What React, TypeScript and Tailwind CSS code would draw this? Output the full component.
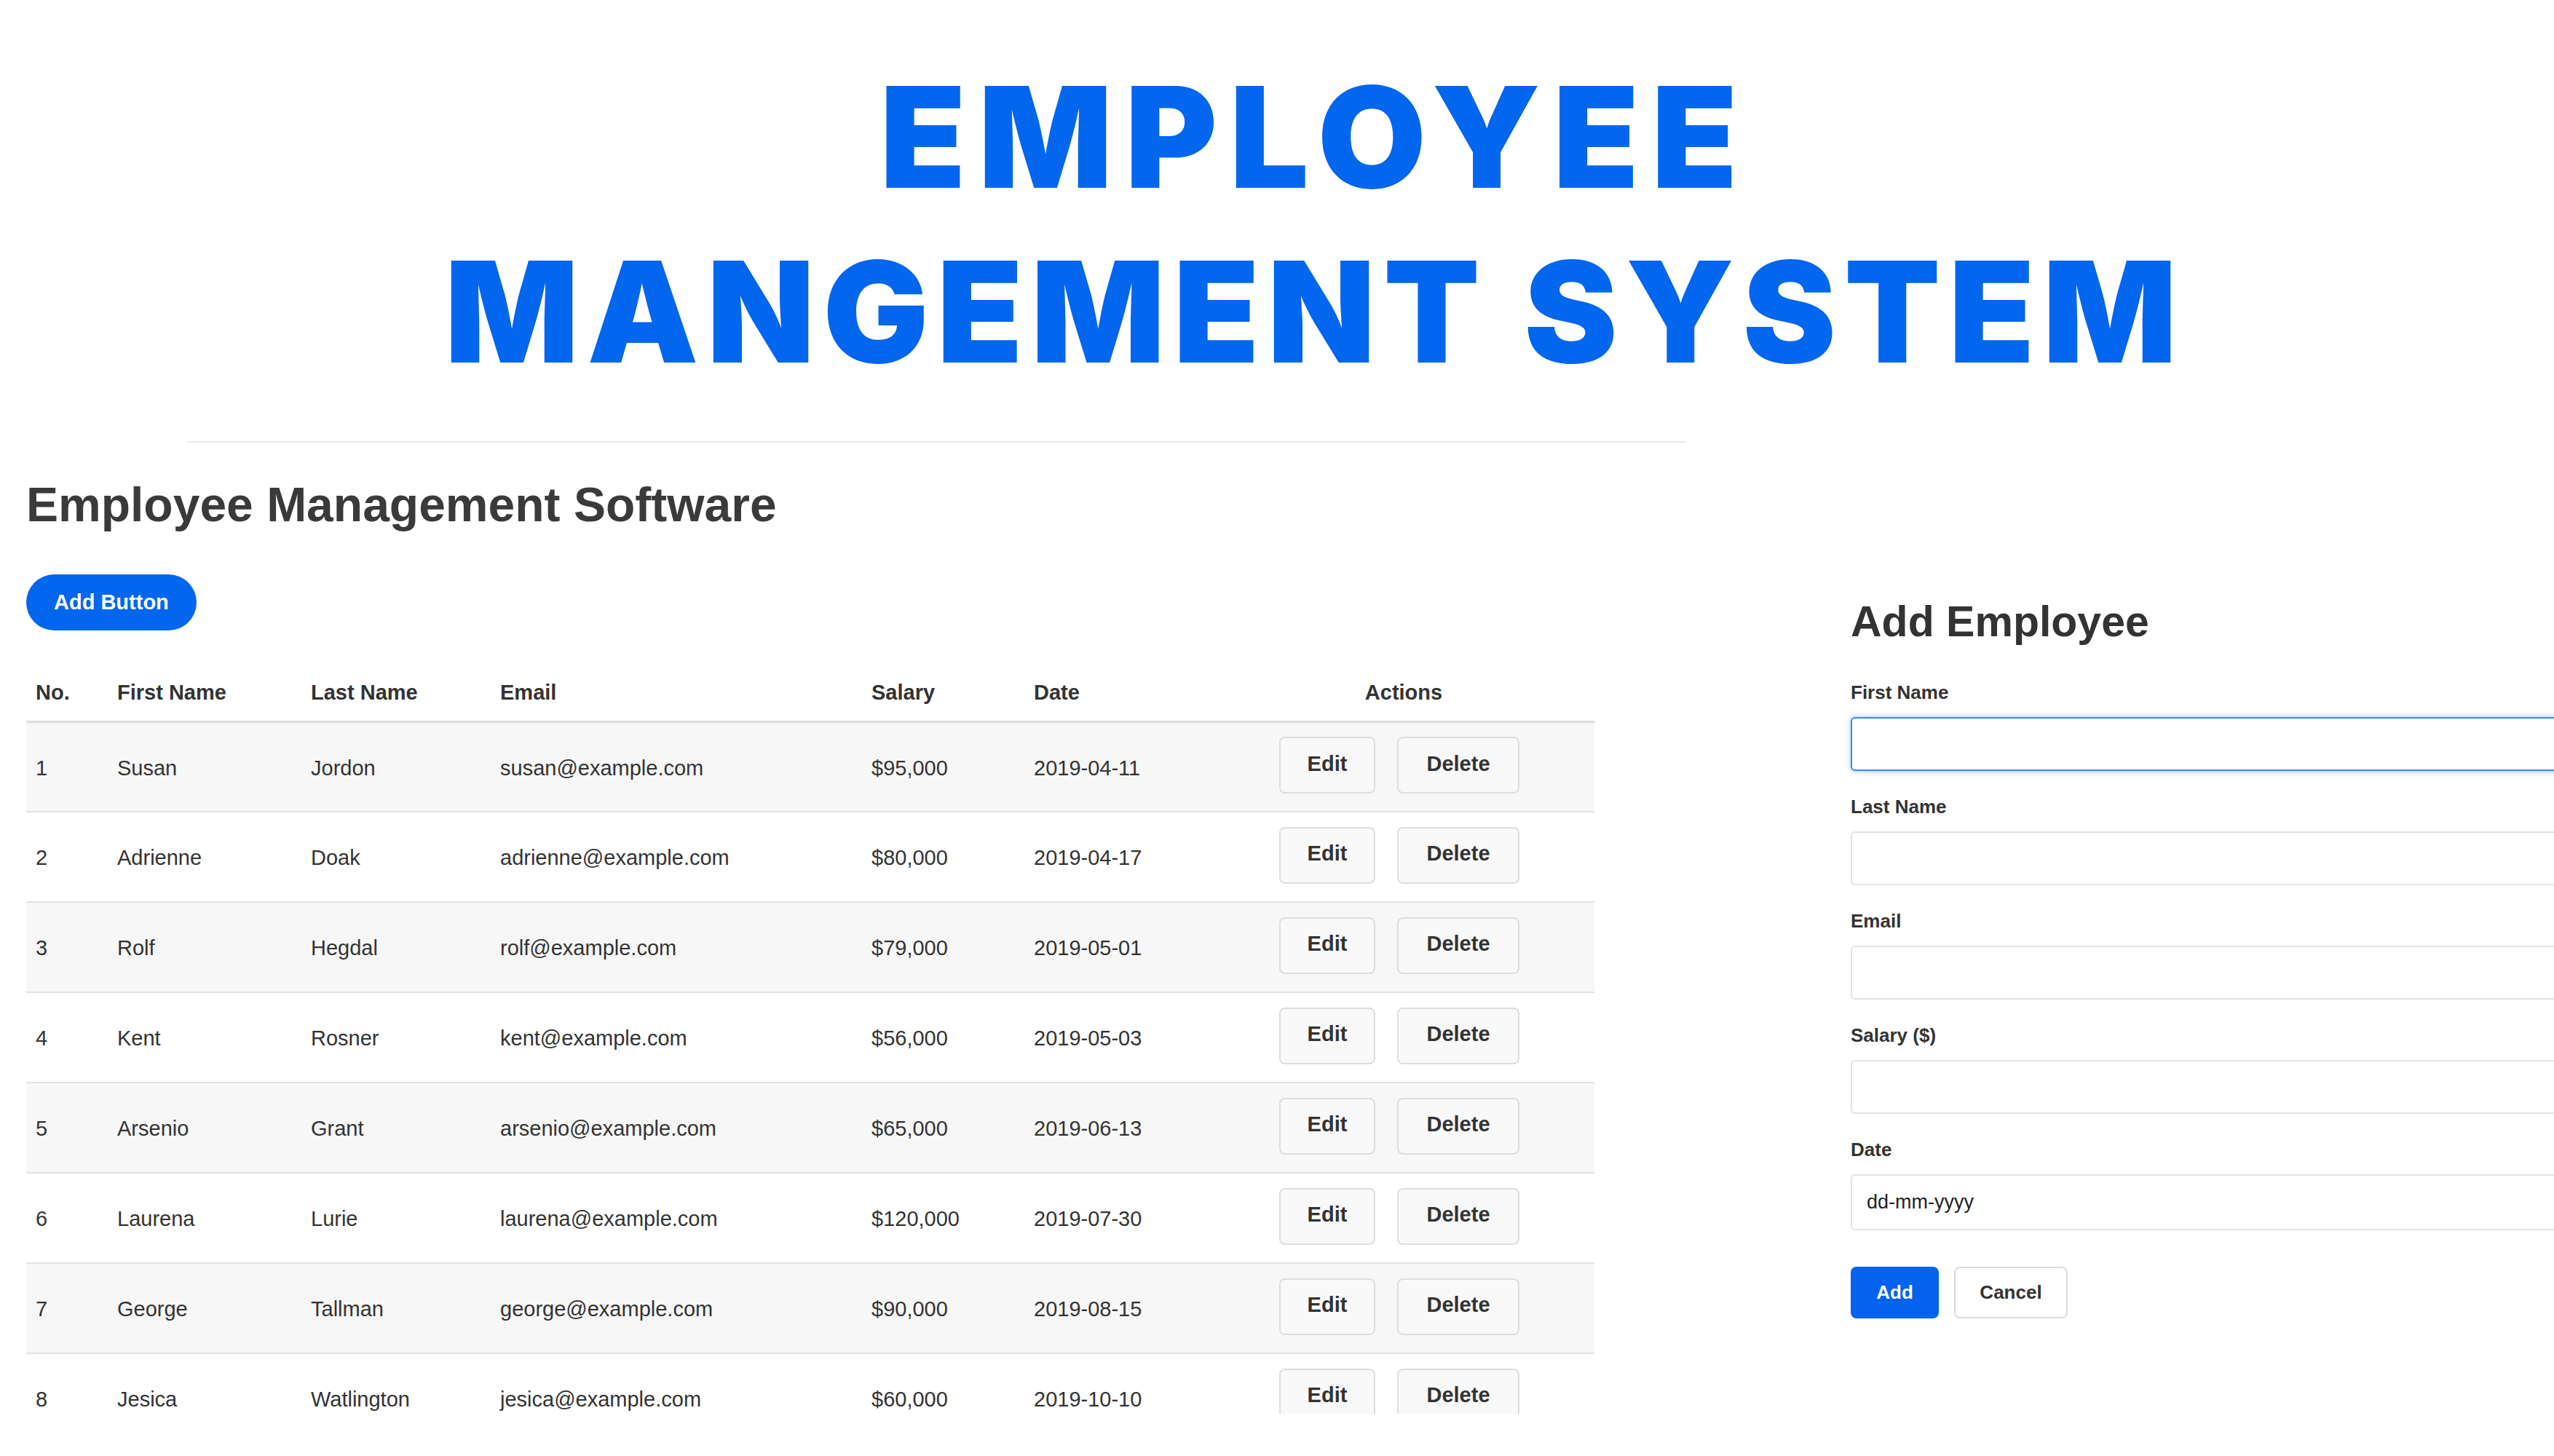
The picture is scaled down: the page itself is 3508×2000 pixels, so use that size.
import React from 'react';

interface Employee {
  id: number;
  firstName: string;
  lastName: string;
  email: string;
  salary: string;
  date: string;
}

const employees: Employee[] = [
  { id: 1, firstName: 'Susan', lastName: 'Jordon', email: 'susan@example.com', salary: '$95,000', date: '2019-04-11' },
  { id: 2, firstName: 'Adrienne', lastName: 'Doak', email: 'adrienne@example.com', salary: '$80,000', date: '2019-04-17' },
  { id: 3, firstName: 'Rolf', lastName: 'Hegdal', email: 'rolf@example.com', salary: '$79,000', date: '2019-05-01' },
  { id: 4, firstName: 'Kent', lastName: 'Rosner', email: 'kent@example.com', salary: '$56,000', date: '2019-05-03' },
  { id: 5, firstName: 'Arsenio', lastName: 'Grant', email: 'arsenio@example.com', salary: '$65,000', date: '2019-06-13' },
  { id: 6, firstName: 'Laurena', lastName: 'Lurie', email: 'laurena@example.com', salary: '$120,000', date: '2019-07-30' },
  { id: 7, firstName: 'George', lastName: 'Tallman', email: 'george@example.com', salary: '$90,000', date: '2019-08-15' },
  { id: 8, firstName: 'Jesica', lastName: 'Watlington', email: 'jesica@example.com', salary: '$60,000', date: '2019-10-10' },
];

const fields = [
  { label: 'First Name', focused: true },
  { label: 'Last Name' },
  { label: 'Email' },
  { label: 'Salary ($)' },
  { label: 'Date', placeholder: 'dd-mm-yyyy' },
];

function EmployeeTable() {
  return (
    <table className="mt-[48px] w-[2154px] table-fixed border-collapse text-[29px] text-[#333]">
      <thead>
        <tr className="h-[77px] border-b-[3px] border-[#dcdcdc] text-left font-bold">
          <th className="w-[112px] pl-[13px]">No.</th>
          <th className="w-[266px] pl-[13px]">First Name</th>
          <th className="w-[260px] pl-[13px]">Last Name</th>
          <th className="w-[510px] pl-[13px]">Email</th>
          <th className="w-[223px] pl-[13px]">Salary</th>
          <th className="w-[259px] pl-[13px]">Date</th>
          <th className="w-[524px] text-center">Actions</th>
        </tr>
      </thead>
      <tbody>
        {employees.map((emp, i) => (
          <tr
            key={emp.id}
            className={`h-[124px] border-b-2 border-[#e2e2e2] ${i % 2 === 0 ? 'bg-[#f7f7f7]' : 'bg-white'}`}
          >
            <td className="pl-[13px] pt-[4px]">{emp.id}</td>
            <td className="pl-[13px] pt-[4px]">{emp.firstName}</td>
            <td className="pl-[13px] pt-[4px]">{emp.lastName}</td>
            <td className="pl-[13px] pt-[4px]">{emp.email}</td>
            <td className="pl-[13px] pt-[4px]">{emp.salary}</td>
            <td className="pl-[13px] pt-[4px]">{emp.date}</td>
            <td className="pb-[4px] pr-[12px]">
              <div className="flex justify-center gap-[30px]">
                <button className="h-[78px] w-[132px] rounded-[8px] border-2 border-[#dddddd] bg-[#f9f9f9] pb-[4px] font-bold text-[#333]">
                  Edit
                </button>
                <button className="h-[78px] w-[168px] rounded-[8px] border-2 border-[#dddddd] bg-[#f9f9f9] pb-[4px] font-bold text-[#333]">
                  Delete
                </button>
              </div>
            </td>
          </tr>
        ))}
      </tbody>
    </table>
  );
}

function AddEmployeeForm() {
  return (
    <aside className="ml-[352px] w-[1100px] shrink-0 pt-[212px]">
      <h2 className="text-[59px] font-bold leading-[68px] text-[#333]">Add Employee</h2>
      <form className="mt-[48px] flex flex-col gap-[34px]">
        {fields.map(f => (
          <div key={f.label} className="flex flex-col gap-[19px]">
            <label className="text-[26px] font-bold leading-[30px] text-[#333]">{f.label}</label>
            <input
              type="text"
              placeholder={f.placeholder}
              className={`w-[1100px] rounded-[6px] border-2 bg-white px-[20px] text-[27px] text-[#222] placeholder:text-[#222] outline-none ${
                f.placeholder ? 'h-[77px]' : 'h-[74px]'
              } ${
                f.focused
                  ? 'border-[#3b86f2] shadow-[0_0_8px_rgba(59,134,242,0.45)]'
                  : 'border-[#e2e2e2]'
              }`}
            />
          </div>
        ))}
      </form>
      <div className="mt-[50px] flex gap-[21px]">
        <button className="h-[71px] w-[121px] rounded-[8px] bg-[#0363ee] text-[26px] font-bold text-white">
          Add
        </button>
        <button className="h-[71px] w-[156px] rounded-[8px] border-2 border-[#dcdcdc] bg-white text-[26px] font-bold text-[#333]">
          Cancel
        </button>
      </div>
    </aside>
  );
}

export default function App() {
  return (
    <div className="h-[2000px] w-[3508px] overflow-hidden bg-white font-['Liberation_Sans',Arial,sans-serif]">
      <div className="h-[1942px] overflow-hidden">
        <header className="pl-[104px] pt-[68px] text-center font-['Inter',sans-serif] text-[193px] font-black leading-[240px] text-[#0366ee]">
          <h1>
            <span className="tracking-[17px]">EMPLOYEE</span>
            <br />
            <span className="tracking-[11px]">MANGEMENT SYSTEM</span>
          </h1>
        </header>
        <div className="ml-[257px] mt-[58px] w-[2058px] border-b-2 border-[#e8e8e8]" />

        <div className="flex">
          <section className="w-[2190px] shrink-0 pl-[36px]">
            <h2 className="mt-[46px] text-[66px] font-bold leading-[79px] text-[#3a3a3a]">
              Employee Management Software
            </h2>
            <button className="mt-[56px] h-[77px] rounded-full bg-[#0366ee] px-[38px] text-[29px] font-bold text-white">
              Add Button
            </button>
            <EmployeeTable />
          </section>
          <AddEmployeeForm />
        </div>
      </div>
    </div>
  );
}
